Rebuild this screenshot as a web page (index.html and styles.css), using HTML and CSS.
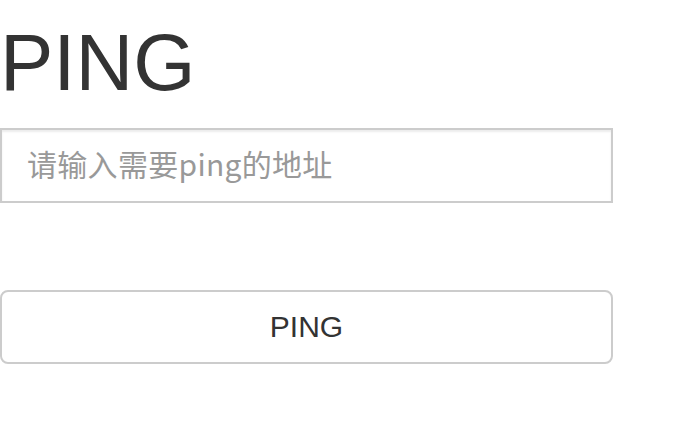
FILE: index.html
```html
<!DOCTYPE html>
<html lang="zh-CN">
<head>
<meta charset="utf-8">
<title>PING</title>
<link rel="stylesheet" href="styles.css">
</head>
<body>
<main class="page">
  <h1 class="title">PING</h1>
  <form class="ping-form" onsubmit="return false">
    <input class="addr" type="text" placeholder="请输入需要ping的地址">
    <button class="btn" type="submit">PING</button>
  </form>
</main>
</body>
</html>
```
FILE: styles.css
```css
html, body {
  margin: 0;
  padding: 0;
  background: #fff;
}
.page {
  width: 613px;
  font-family: "Liberation Sans", Arial, sans-serif;
  color: #333;
}
.title {
  margin: 17px 0 19px;
  font-size: 80px;
  line-height: 92px;
  font-weight: normal;
  color: #333;
}
.ping-form {
  display: flex;
  flex-direction: column;
  gap: 87px;
}
.addr {
  box-sizing: border-box;
  width: 613px;
  height: 75px;
  margin: 0;
  padding: 0 24px 6px 25px;
  border: 2px solid #ccc;
  border-radius: 0;
  box-shadow: inset 0 2px 2px rgba(0,0,0,0.075);
  font-family: "Noto Sans CJK SC", "Liberation Sans", sans-serif;
  font-size: 30px;
  letter-spacing: 0.3px;
  color: #555;
  outline: none;
  background: #fff;
}
.addr::placeholder {
  color: #999;
}
.btn {
  box-sizing: border-box;
  width: 613px;
  height: 74px;
  margin: 0;
  border: 2px solid #ccc;
  border-radius: 8px;
  background: #fff;
  font-family: "Liberation Sans", Arial, sans-serif;
  font-size: 30px;
  color: #333;
  cursor: pointer;
}
```
